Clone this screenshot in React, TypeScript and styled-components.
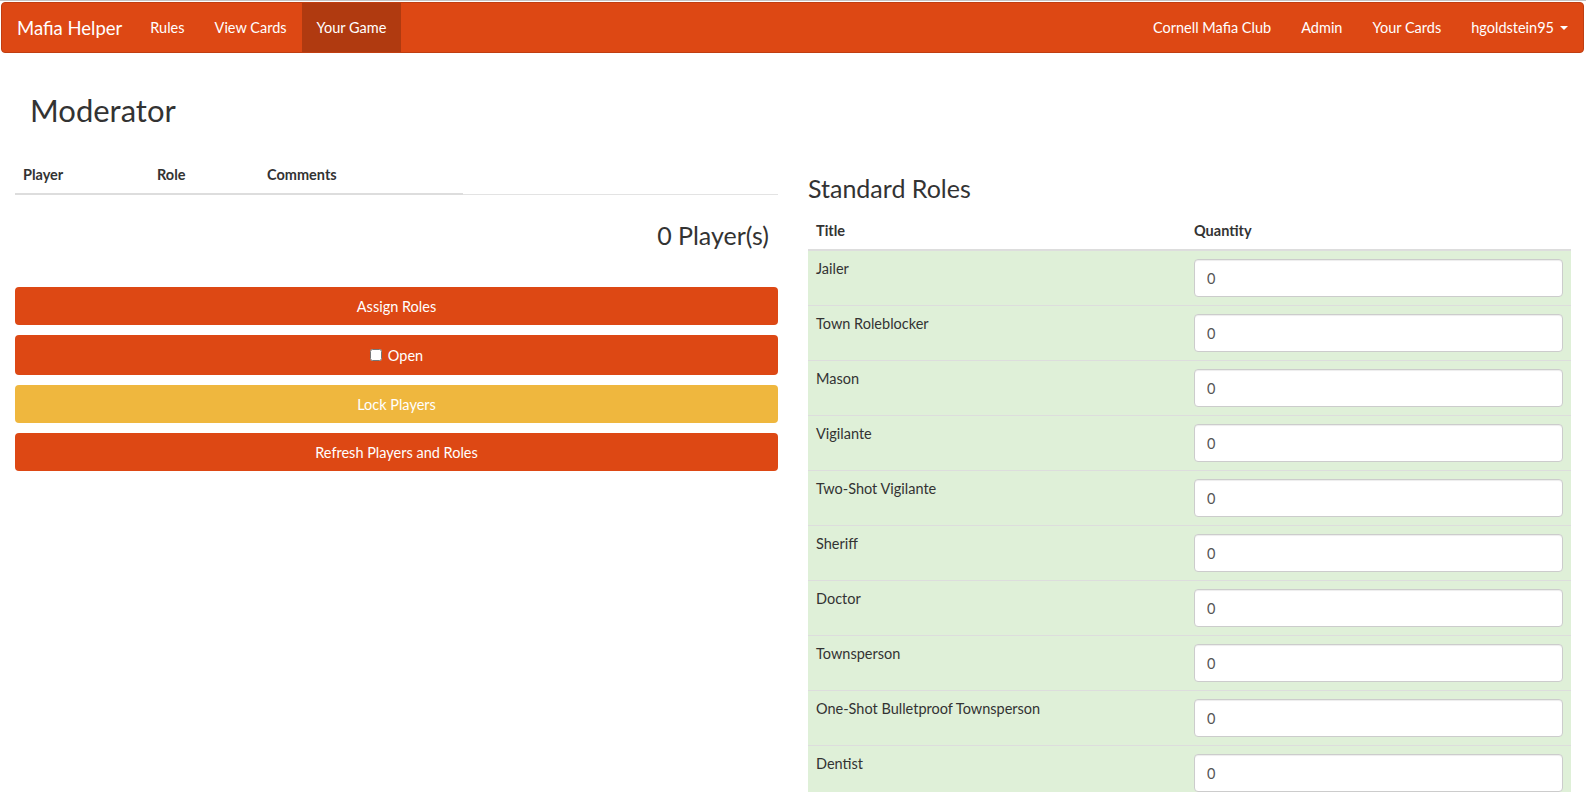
import React from "react";
import styled, { createGlobalStyle, css } from "styled-components";

const Global = createGlobalStyle`
  html, body { margin: 0; padding: 0; overflow: hidden; background: #fff; }
  body {
    font-family: Lato, "Open Sans", "Noto Sans", sans-serif;
    font-size: 14.5px;
    line-height: 20px;
    color: #333;
    border-top: 1px solid #c4c4c4;
  }
  * { box-sizing: border-box; }
`;

const NAV_BG = "#dd4814";

const Navbar = styled.nav`
  margin: 1px 2px 0 1px;
  height: 51px;
  background: ${NAV_BG};
  border: 1px solid #c03e11;
  border-radius: 4px;
  display: flex;
  justify-content: space-between;
  align-items: stretch;
`;

const NavGroup = styled.div`
  display: flex;
  align-items: stretch;
`;

const Brand = styled.a`
  display: flex;
  align-items: center;
  padding: 0 13px 0 15px;
  font-size: 18.5px;
  color: #fff;
  text-decoration: none;
`;

const NavLink = styled.a<{ $active?: boolean }>`
  display: flex;
  align-items: center;
  padding: 1px 15px 0;
  color: #fff;
  text-decoration: none;
  font-size: 14.5px;
  ${(p) =>
    p.$active &&
    css`
      background: #b03a10;
    `}
`;

const Caret = styled.span`
  display: inline-block;
  width: 0;
  height: 0;
  margin-left: 6px;
  border-top: 4px solid #fff;
  border-left: 4px solid transparent;
  border-right: 4px solid transparent;
`;

const Main = styled.main`
  padding: 0 15px;
`;

const PageTitle = styled.h2`
  margin: 41px 0 25px;
  padding-left: 15px;
  font-size: 31px;
  line-height: 33px;
  font-weight: 400;
`;

const Columns = styled.div`
  display: grid;
  grid-template-columns: 1fr 1fr;
  column-gap: 30px;
`;

const Column = styled.section``;

const PlayerHeadWrap = styled.div`
  margin-top: 5px;
  display: flex;
  border-bottom: 1px solid #e3e3e3;
`;

const PlayerHead = styled.div`
  display: flex;
  border-bottom: 2px solid #ddd;
  margin-bottom: -1px;
`;

const HeadCell = styled.div<{ $w: number }>`
  width: ${(p) => p.$w}px;
  padding: 8px;
  font-weight: 700;
  line-height: 20px;
`;

const PlayerCount = styled.div`
  margin-top: 19px;
  padding: 8px 9px 8px 8px;
  text-align: right;
  font-size: 25px;
  line-height: 26px;
`;

const Actions = styled.div`
  margin-top: 31px;
  display: flex;
  flex-direction: column;
  gap: 10px;
`;

const Button = styled.button<{ $variant?: "primary" | "warning"; $tall?: boolean }>`
  width: 100%;
  display: flex;
  align-items: center;
  justify-content: center;
  gap: 6px;
  height: ${(p) => (p.$tall ? 40 : 38)}px;
  padding: 0 12px;
  border: 1px solid transparent;
  border-radius: 4px;
  font-family: inherit;
  font-size: 14.5px;
  color: #fff;
  cursor: pointer;
  background: ${(p) => (p.$variant === "warning" ? "#efb73e" : NAV_BG)};
`;

const Check = styled.input`
  width: 12px;
  height: 12px;
  margin: 0;
`;

const SectionTitle = styled.h3`
  margin: 23px 0 12px;
  font-size: 25px;
  line-height: 26px;
  font-weight: 400;
`;

const RolesTable = styled.table`
  width: 100%;
  border-collapse: collapse;
  border-spacing: 0;
`;

const Th = styled.th<{ $w?: string }>`
  text-align: left;
  padding: 8px;
  line-height: 20px;
  font-weight: 700;
  border-bottom: 2px solid #ddd;
  width: ${(p) => p.$w || "auto"};
`;

const Tr = styled.tr`
  background: #dff0d8;
`;

const Td = styled.td`
  padding: 8px;
  vertical-align: top;
  line-height: 20px;
  border-top: 1px solid #ddd;
`;

const QtyInput = styled.input`
  display: block;
  width: 100%;
  height: 38px;
  padding: 8px 12px;
  font-family: inherit;
  font-size: 14.5px;
  color: #555;
  background: #fff;
  border: 1px solid #ccc;
  border-radius: 4px;
  box-shadow: inset 0 1px 1px rgba(0, 0, 0, 0.075);
`;

const roles = [
  "Jailer",
  "Town Roleblocker",
  "Mason",
  "Vigilante",
  "Two-Shot Vigilante",
  "Sheriff",
  "Doctor",
  "Townsperson",
  "One-Shot Bulletproof Townsperson",
  "Dentist",
];

export default function App() {
  return (
    <>
      <Global />
      <Navbar>
        <NavGroup>
          <Brand href="#">Mafia Helper</Brand>
          <NavLink href="#">Rules</NavLink>
          <NavLink href="#">View Cards</NavLink>
          <NavLink href="#" $active>
            Your Game
          </NavLink>
        </NavGroup>
        <NavGroup>
          <NavLink href="#">Cornell Mafia Club</NavLink>
          <NavLink href="#">Admin</NavLink>
          <NavLink href="#">Your Cards</NavLink>
          <NavLink href="#">
            hgoldstein95
            <Caret />
          </NavLink>
        </NavGroup>
      </Navbar>
      <Main>
        <PageTitle>Moderator</PageTitle>
        <Columns>
          <Column>
            <PlayerHeadWrap>
              <PlayerHead>
                <HeadCell $w={134}>Player</HeadCell>
                <HeadCell $w={110}>Role</HeadCell>
                <HeadCell $w={204}>Comments</HeadCell>
              </PlayerHead>
            </PlayerHeadWrap>
            <PlayerCount>0 Player(s)</PlayerCount>
            <Actions>
              <Button>Assign Roles</Button>
              <Button $tall>
                <Check type="checkbox" readOnly />
                Open
              </Button>
              <Button $variant="warning">Lock Players</Button>
              <Button>Refresh Players and Roles</Button>
            </Actions>
          </Column>
          <Column>
            <SectionTitle>Standard Roles</SectionTitle>
            <RolesTable>
              <thead>
                <tr>
                  <Th $w="378px">Title</Th>
                  <Th>Quantity</Th>
                </tr>
              </thead>
              <tbody>
                {roles.map((r) => (
                  <Tr key={r}>
                    <Td>{r}</Td>
                    <Td>
                      <QtyInput type="text" defaultValue="0" />
                    </Td>
                  </Tr>
                ))}
              </tbody>
            </RolesTable>
          </Column>
        </Columns>
      </Main>
    </>
  );
}
